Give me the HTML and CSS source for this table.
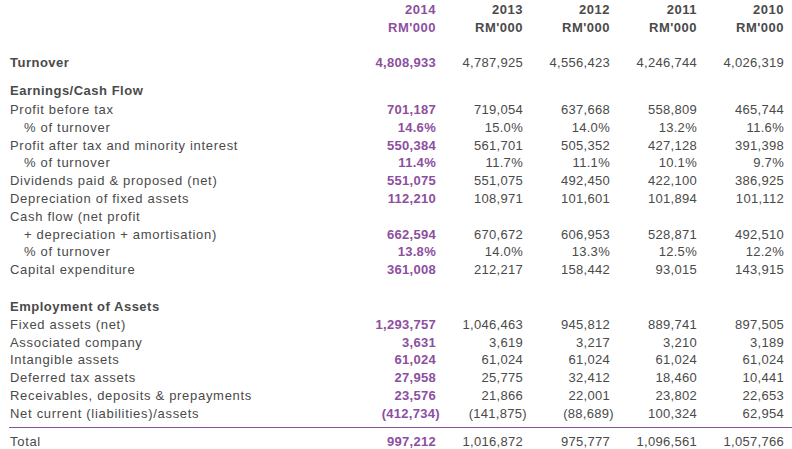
FILE: index.html
```html
<!DOCTYPE html>
<html>
<head>
<meta charset="utf-8">
<link rel="stylesheet" href="styles.css">
</head>
<body>
<div class="report">
  <div class="row head">
    <div></div><div class="num hl">2014</div><div class="num">2013</div><div class="num">2012</div><div class="num">2011</div><div class="num">2010</div>
  </div>
  <div class="row head">
    <div></div><div class="num hl">RM'000</div><div class="num">RM'000</div><div class="num">RM'000</div><div class="num">RM'000</div><div class="num">RM'000</div>
  </div>
  <div class="row spacer"></div>
  <div class="row">
    <div class="lbl title">Turnover</div><div class="num hl">4,808,933</div><div class="num">4,787,925</div><div class="num">4,556,423</div><div class="num">4,246,744</div><div class="num">4,026,319</div>
  </div>

  <div class="row section-gap1">
    <div class="lbl title">Earnings/Cash Flow</div>
  </div>
  <div class="row first">
    <div class="lbl">Profit before tax</div><div class="num hl">701,187</div><div class="num">719,054</div><div class="num">637,668</div><div class="num">558,809</div><div class="num">465,744</div>
  </div>
  <div class="row">
    <div class="lbl ind">% of turnover</div><div class="num hl">14.6%</div><div class="num">15.0%</div><div class="num">14.0%</div><div class="num">13.2%</div><div class="num">11.6%</div>
  </div>
  <div class="row">
    <div class="lbl">Profit after tax and minority interest</div><div class="num hl">550,384</div><div class="num">561,701</div><div class="num">505,352</div><div class="num">427,128</div><div class="num">391,398</div>
  </div>
  <div class="row">
    <div class="lbl ind">% of turnover</div><div class="num hl">11.4%</div><div class="num">11.7%</div><div class="num">11.1%</div><div class="num">10.1%</div><div class="num">9.7%</div>
  </div>
  <div class="row">
    <div class="lbl">Dividends paid &amp; proposed (net)</div><div class="num hl">551,075</div><div class="num">551,075</div><div class="num">492,450</div><div class="num">422,100</div><div class="num">386,925</div>
  </div>
  <div class="row">
    <div class="lbl">Depreciation of fixed assets</div><div class="num hl">112,210</div><div class="num">108,971</div><div class="num">101,601</div><div class="num">101,894</div><div class="num">101,112</div>
  </div>
  <div class="row">
    <div class="lbl">Cash flow (net profit</div>
  </div>
  <div class="row">
    <div class="lbl ind">+ depreciation + amortisation)</div><div class="num hl">662,594</div><div class="num">670,672</div><div class="num">606,953</div><div class="num">528,871</div><div class="num">492,510</div>
  </div>
  <div class="row">
    <div class="lbl ind">% of turnover</div><div class="num hl">13.8%</div><div class="num">14.0%</div><div class="num">13.3%</div><div class="num">12.5%</div><div class="num">12.2%</div>
  </div>
  <div class="row">
    <div class="lbl">Capital expenditure</div><div class="num hl">361,008</div><div class="num">212,217</div><div class="num">158,442</div><div class="num">93,015</div><div class="num">143,915</div>
  </div>

  <div class="row section-gap2">
    <div class="lbl title">Employment of Assets</div>
  </div>
  <div class="row">
    <div class="lbl">Fixed assets (net)</div><div class="num hl">1,293,757</div><div class="num">1,046,463</div><div class="num">945,812</div><div class="num">889,741</div><div class="num">897,505</div>
  </div>
  <div class="row">
    <div class="lbl">Associated company</div><div class="num hl">3,631</div><div class="num">3,619</div><div class="num">3,217</div><div class="num">3,210</div><div class="num">3,189</div>
  </div>
  <div class="row">
    <div class="lbl">Intangible assets</div><div class="num hl">61,024</div><div class="num">61,024</div><div class="num">61,024</div><div class="num">61,024</div><div class="num">61,024</div>
  </div>
  <div class="row">
    <div class="lbl">Deferred tax assets</div><div class="num hl">27,958</div><div class="num">25,775</div><div class="num">32,412</div><div class="num">18,460</div><div class="num">10,441</div>
  </div>
  <div class="row">
    <div class="lbl">Receivables, deposits &amp; prepayments</div><div class="num hl">23,576</div><div class="num">21,866</div><div class="num">22,001</div><div class="num">23,802</div><div class="num">22,653</div>
  </div>
  <div class="row">
    <div class="lbl">Net current (liabilities)/assets</div><div class="num hl"><span class="neg">(412,734)</span></div><div class="num"><span class="neg">(141,875)</span></div><div class="num"><span class="neg">(88,689)</span></div><div class="num">100,324</div><div class="num">62,954</div>
  </div>

  <div class="row total">
    <div class="lbl">Total</div><div class="num hl">997,212</div><div class="num">1,016,872</div><div class="num">975,777</div><div class="num">1,096,561</div><div class="num">1,057,766</div>
  </div>
</div>
</body>
</html>
```

FILE: styles.css
```css
html, body {
  margin: 0;
  padding: 0;
  background: #ffffff;
}

.report {
  padding: 1px 0 0 10px;
  font-family: "Liberation Sans", Arial, sans-serif;
  font-size: 13px;
  color: #4a4a4a;
  width: 782px;
}

.row {
  display: grid;
  grid-template-columns: 339px repeat(5, 87px);
  height: 17.8px;
  line-height: 17.8px;
  white-space: nowrap;
}

.row.spacer {
  height: 17.8px;
}

.head .num {
  font-weight: bold;
  letter-spacing: 0.5px;
}

.lbl {
  letter-spacing: 0.7px;
}

.lbl.ind {
  padding-left: 14px;
}

.lbl.title {
  font-weight: bold;
  letter-spacing: 0.5px;
}

.num {
  text-align: right;
  letter-spacing: 0.3px;
}

.num.hl {
  color: #8c4f9f;
  font-weight: bold;
}

.neg {
  display: inline-block;
  margin-right: -4px;
}

.section-gap1 {
  margin-top: 10px;
}

.first {
  margin-top: 1px;
}

.section-gap2 {
  margin-top: 19px;
}

.total {
  margin-left: -1px;
  padding-left: 1px;
  margin-top: 4px;
  padding-top: 5px;
  border-top: 1px solid #8c4f9f;
  box-sizing: content-box;
}
```
